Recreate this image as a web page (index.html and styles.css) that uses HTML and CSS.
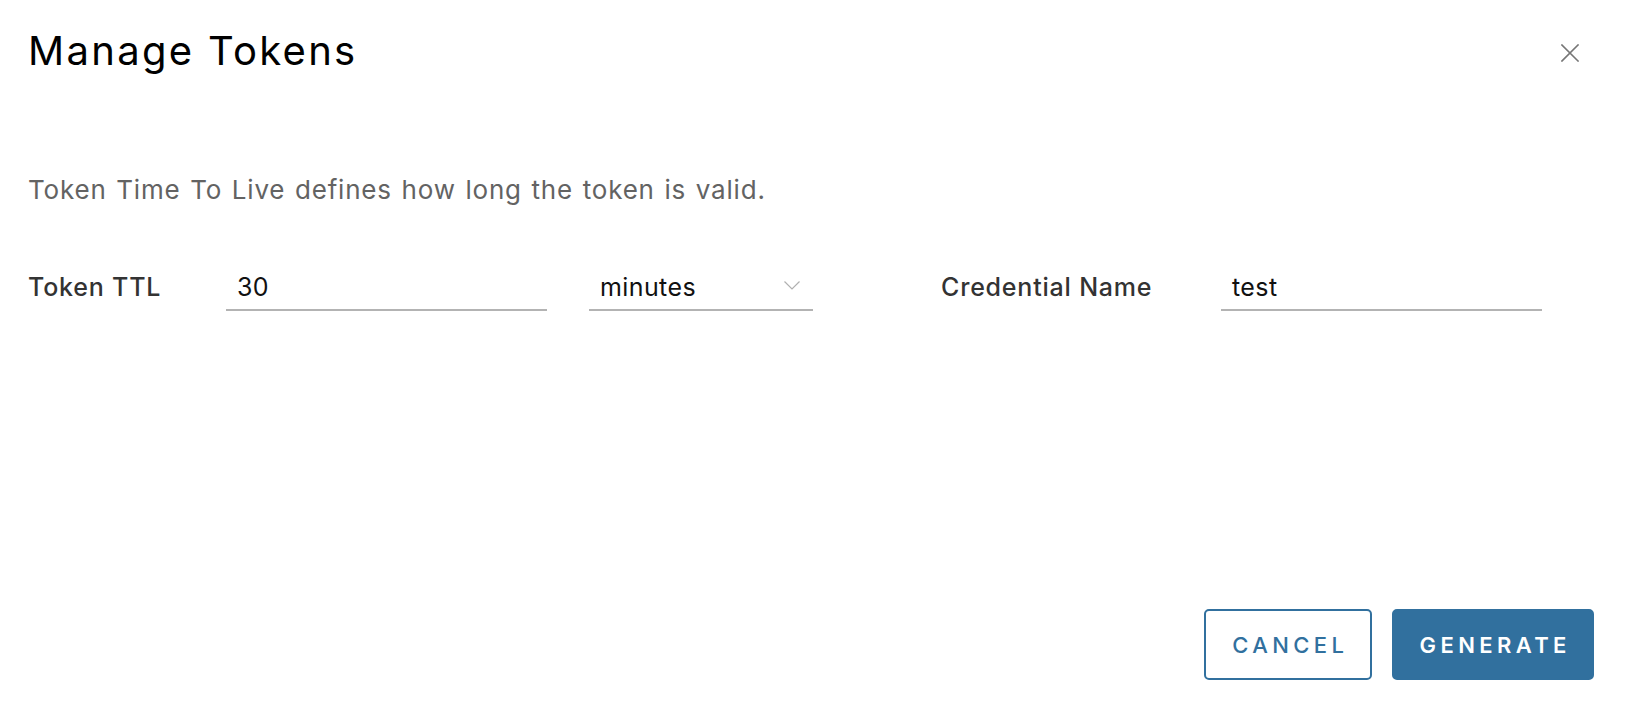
FILE: index.html
```
<!DOCTYPE html>
<html lang="en">
<head>
<meta charset="utf-8">
<title>Manage Tokens</title>
<link rel="stylesheet" href="styles.css">
</head>
<body>
<div class="modal">
  <header class="modal-header">
    <h1 class="modal-title">Manage Tokens</h1>
    <button class="close" type="button" aria-label="Close">
      <svg width="18" height="18" viewBox="0 0 18 18" aria-hidden="true">
        <path d="M1 1 L17 17 M17 1 L1 17" stroke="#767676" stroke-width="1.6" fill="none" stroke-linecap="square"/>
      </svg>
    </button>
  </header>

  <p class="description">Token Time To Live defines how long the token is valid.</p>

  <div class="form-row">
    <label class="label label-ttl">Token TTL</label>
    <div class="field field-ttl">30</div>
    <div class="field select">
      <span>minutes</span>
      <svg class="chevron" width="16" height="9" viewBox="0 0 16 9" aria-hidden="true">
        <path d="M0.5 0.5 L8 8 L15.5 0.5" stroke="#b0b0b0" stroke-width="1.2" fill="none"/>
      </svg>
    </div>
    <label class="label label-name">Credential Name</label>
    <div class="field field-name">test</div>
  </div>

  <footer class="modal-footer">
    <button class="btn btn-outline" type="button">CANCEL</button>
    <button class="btn btn-primary" type="button">GENERATE</button>
  </footer>
</div>
</body>
</html>
```
FILE: styles.css
```
html, body {
  margin: 0;
  padding: 0;
  background: #ffffff;
}

body {
  font-family: Inter, "Noto Sans", sans-serif;
  color: #000;
}

.modal {
  min-height: 712px;
  box-sizing: border-box;
  padding: 26px 40px 32px 28px;
  display: flex;
  flex-direction: column;
}

.modal-header {
  display: flex;
  justify-content: space-between;
  align-items: flex-start;
}

.modal-title {
  margin: 0;
  font-size: 40px;
  line-height: 50px;
  font-weight: 400;
  letter-spacing: 2.3px;
  color: #000;
}

.close {
  margin: 18px 15px 0 0;
  padding: 0;
  border: 0;
  background: none;
  width: 18px;
  height: 18px;
  display: flex;
}

.description {
  margin: 99px 0 0;
  font-size: 26px;
  line-height: 30px;
  letter-spacing: 0.8px;
  word-spacing: 1.6px;
  color: #636363;
}

.form-row {
  margin-top: 67px;
  display: flex;
  align-items: flex-start;
}

.label {
  font-size: 25px;
  line-height: 30px;
  font-weight: 500;
  letter-spacing: 0.8px;
  color: #333333;
}

.label-ttl {
  width: 198px;
}

.label-name {
  margin-left: 128px;
  width: 280px;
}

.field {
  box-sizing: border-box;
  font-size: 25px;
  line-height: 30px;
  letter-spacing: 0.4px;
  color: #111;
  padding: 0 0 7px 11px;
  border-bottom: 2px solid #b3b3b3;
}

.field-ttl,
.field-name {
  width: 321px;
}

.select {
  margin-left: 42px;
  width: 224px;
  display: flex;
  justify-content: space-between;
  align-items: flex-start;
  padding-right: 13px;
}

.chevron {
  margin-top: 9px;
}

.modal-footer {
  margin-top: auto;
  display: flex;
  justify-content: flex-end;
  gap: 20px;
}

.btn {
  box-sizing: border-box;
  height: 71px;
  border-radius: 5px;
  font-family: Inter, "Noto Sans", sans-serif;
  font-size: 22px;
  font-weight: 500;
  letter-spacing: 4.4px;
  padding: 0 0 0 4.4px;
  cursor: pointer;
}

.btn-outline {
  width: 168px;
  background: #fff;
  color: #31709e;
  border: 2px solid #31709e;
}

.btn-primary {
  width: 202px;
  background: #31709e;
  color: #fff;
  border: 2px solid #31709e;
  font-weight: 600;
}
```
